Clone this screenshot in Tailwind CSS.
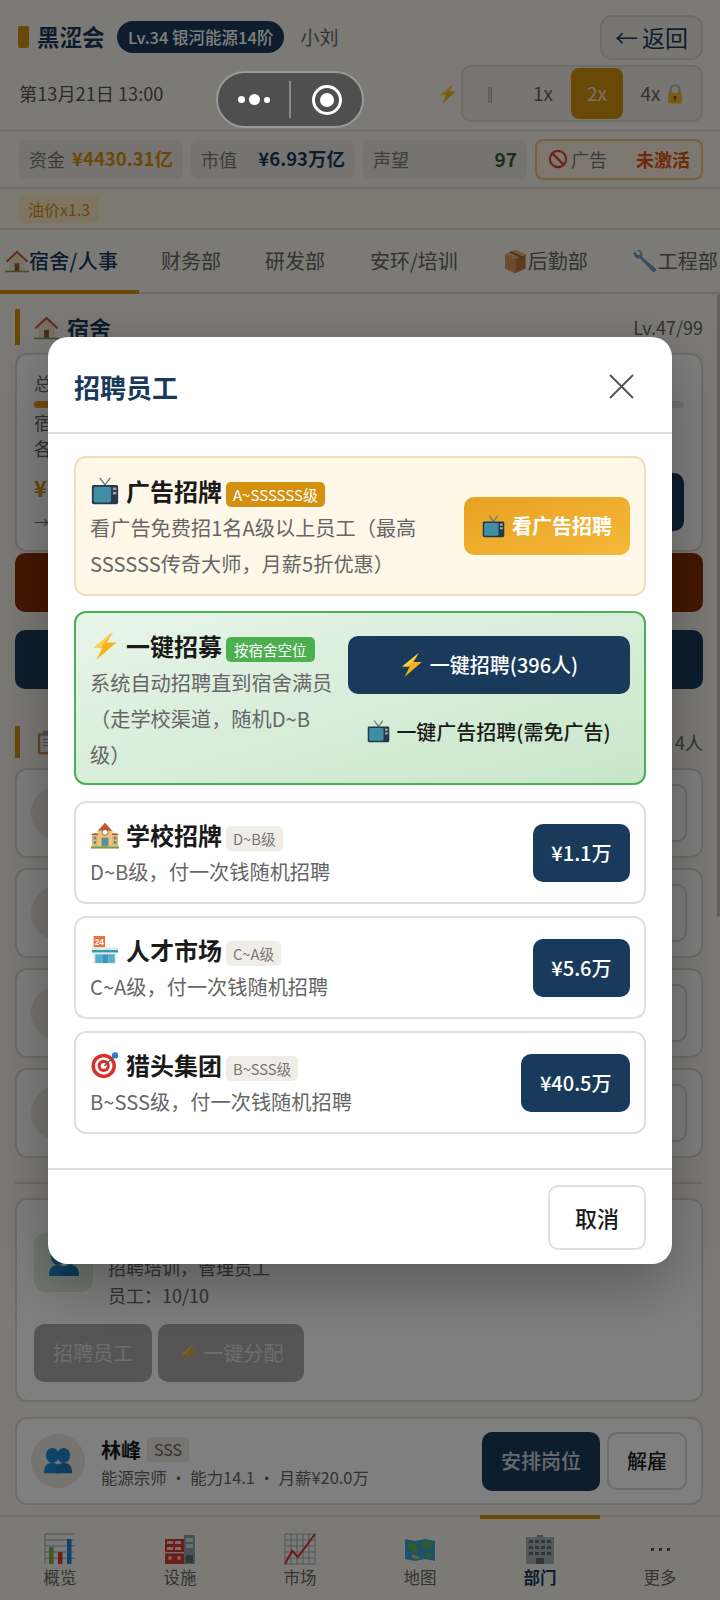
<!DOCTYPE html>
<html lang="zh-CN">
  <head>
    <meta charset="UTF-8" />
    <meta name="viewport" content="width=device-width, initial-scale=1.0" />
    <title>黑涩会</title>
    <script src="https://cdn.jsdelivr.net/npm/@tailwindcss/browser@4"></script>
  </head>
  <body class="bg-[#f7f4ee] font-['Noto_Sans_CJK_SC','Noto_Sans',sans-serif] text-[#1a1a1a]">
    <!-- icon sprite -->
    <svg class="hidden" xmlns="http://www.w3.org/2000/svg">
      <symbol id="i-tv" viewBox="0 0 32 32">
        <path d="M10 1l6 8 6-8" fill="none" stroke="#6b7780" stroke-width="1.6" />
        <rect x="1" y="9" width="30" height="22" rx="2" fill="#24384a" />
        <rect x="3" y="11" width="20" height="18" rx="2" fill="#3f8ea3" />
        <rect x="25" y="12" width="4" height="3" fill="#9aa7b0" />
        <rect x="25" y="17" width="4" height="3" fill="#9aa7b0" />
      </symbol>
      <symbol id="i-bolt" viewBox="0 0 32 32">
        <path d="M25 0L3 18h10L6 32l23-20H18z" fill="#f6b21b" />
        <path d="M25 0L3 18h8z" fill="#fbd04a" />
      </symbol>
      <symbol id="i-school" viewBox="0 0 32 32">
        <path d="M16 2L7 12h18z" fill="#c0562b" />
        <rect x="8" y="11" width="16" height="18" fill="#f2c27a" />
        <rect x="1" y="15" width="7" height="14" fill="#e9b56c" />
        <rect x="24" y="15" width="7" height="14" fill="#e9b56c" />
        <path d="M0 16h8v-2H3zM32 16h-8v-2h5z" fill="#c0562b" />
        <circle cx="16" cy="13" r="3.4" fill="#fff" stroke="#8a5a2b" />
        <rect x="12" y="19" width="8" height="10" fill="#5a8f9e" />
        <rect x="3" y="18" width="3" height="3" fill="#4a8fa3" />
        <rect x="26" y="18" width="3" height="3" fill="#4a8fa3" />
        <rect x="3" y="23" width="3" height="3" fill="#4a8fa3" />
        <rect x="26" y="23" width="3" height="3" fill="#4a8fa3" />
        <rect x="0" y="29" width="32" height="2.500" fill="#6fa23e" />
      </symbol>
      <symbol id="i-store" viewBox="0 0 32 32">
        <rect x="3" y="0" width="13" height="13" fill="#e8743b" />
        <text x="9.500" y="10" text-anchor="middle" font-size="9.500" font-weight="700" fill="#fff" font-family="Liberation Sans, sans-serif">24</text>
        <rect x="1" y="13" width="30" height="3" fill="#e4e7e9" />
        <rect x="1" y="16" width="30" height="3" fill="#2aa3a8" />
        <rect x="3" y="19" width="26" height="12" fill="#dfe5e8" />
        <rect x="5" y="21" width="8" height="10" fill="#55b0cc" />
        <rect x="13" y="21" width="7" height="10" fill="#3d97b5" />
        <rect x="20" y="21" width="7" height="10" fill="#55b0cc" />
      </symbol>
      <symbol id="i-target" viewBox="0 0 32 32">
        <circle cx="14.500" cy="17" r="14" fill="#d9302c" />
        <circle cx="14.500" cy="17" r="10" fill="#fff" />
        <circle cx="14.500" cy="17" r="7" fill="#d9302c" />
        <circle cx="14.500" cy="17" r="3.400" fill="#fff" />
        <path d="M15 17L28 5" stroke="#555" stroke-width="1.4" />
        <circle cx="27.500" cy="5" r="3.600" fill="#2f7fd1" />
      </symbol>
      <symbol id="i-house" viewBox="0 0 32 32">
        <path d="M16 2L1 16l2 2L16 6l13 12 2-2z" fill="#c75b38" />
        <path d="M6 15L16 6l10 9v15H6z" fill="#efe0c4" />
        <rect x="13" y="19" width="6" height="11" fill="#8a5a3a" />
        <rect x="0" y="29" width="32" height="2" fill="#6fa23e" />
      </symbol>
      <symbol id="i-box" viewBox="0 0 32 32">
        <path d="M16 1L3 7v18l13 6 13-6V7z" fill="#b9793e" />
        <path d="M16 13L3 7v18l13 6z" fill="#d79a5c" />
        <path d="M16 13l13-6-13-6L3 7z" fill="#e6b37a" />
        <path d="M8 4.500l13 6v5l3-1.400v-5L11 3z" fill="#a46a35" />
      </symbol>
      <symbol id="i-wrench" viewBox="0 0 32 32">
        <path d="M4 2c4-2 8 0 8 5 0 1 0 2-.5 3L29 25c2 2-2 6-4 4L9 12c-4 1-8-2-8-6 0-1 0-2 1-3l4 5 3-1 1-3z" fill="#6f9cc0" />
      </symbol>
      <symbol id="i-ban" viewBox="0 0 32 32">
        <circle cx="16" cy="16" r="13" fill="none" stroke="#d8423c" stroke-width="3.500" />
        <path d="M7 7l18 18" stroke="#d8423c" stroke-width="3.500" />
      </symbol>
      <symbol id="i-lock" viewBox="0 0 32 32">
        <path d="M9 15V9a7 7 0 0 1 14 0v6" fill="none" stroke="#a7b2ba" stroke-width="3.500" />
        <rect x="5" y="14" width="22" height="17" rx="2" fill="#f3b723" />
        <circle cx="16" cy="21" r="2.400" fill="#7a5a10" />
        <rect x="15" y="22" width="2" height="5" fill="#7a5a10" />
      </symbol>
      <symbol id="i-people" viewBox="0 0 32 32">
        <ellipse cx="10" cy="10" rx="7" ry="8" fill="#1f86cf" />
        <ellipse cx="22" cy="10" rx="7" ry="8" fill="#1f86cf" />
        <path d="M1 29c0-8 3-11 9-11s9 3 9 11z" fill="#1f86cf" />
        <path d="M13 29c0-8 3-11 9-11s9 3 9 11z" fill="#1a78bc" />
      </symbol>
      <symbol id="i-clip" viewBox="0 0 32 32">
        <rect x="5" y="4" width="22" height="27" rx="2" fill="#c68a4e" />
        <rect x="8" y="7" width="16" height="21" fill="#f1f1f1" />
        <rect x="11" y="1" width="10" height="6" rx="1" fill="#8e99a1" />
        <path d="M11 12h10M11 16h10M11 20h10" stroke="#8e99a1" stroke-width="1.500" />
      </symbol>
      <symbol id="i-bars" viewBox="0 0 32 32">
        <rect x="1" y="1" width="30" height="30" fill="#f4f4f4" />
        <path d="M1 1h30M1 7h30M1 13h30M1 19h30M1 25h30M1 1v30" stroke="#9aa0a4" stroke-width="1" fill="none" />
        <rect x="5" y="14" width="4.500" height="17" fill="#79b34a" />
        <rect x="14" y="19" width="4.500" height="12" fill="#d9412c" />
        <rect x="23" y="6" width="4.500" height="25" fill="#1c85d0" />
      </symbol>
      <symbol id="i-factory" viewBox="0 0 32 32">
        <rect x="20" y="2" width="11" height="29" fill="#8fa3ac" />
        <rect x="22" y="5" width="7" height="4" fill="#cfe2e8" />
        <rect x="22" y="11" width="7" height="4" fill="#cfe2e8" />
        <rect x="22" y="22" width="7" height="8" fill="#5f6a70" />
        <rect x="1" y="6" width="19" height="25" fill="#d63b35" />
        <rect x="3" y="8" width="6" height="3" fill="#f4d5d0" />
        <rect x="11" y="8" width="6" height="3" fill="#f4d5d0" />
        <rect x="3" y="14" width="6" height="3" fill="#f4d5d0" />
        <rect x="11" y="14" width="6" height="3" fill="#f4d5d0" />
        <rect x="1" y="19" width="19" height="1.500" fill="#f4d5d0" />
        <circle cx="6" cy="25" r="2" fill="#f3c9a5" />
        <circle cx="15" cy="25" r="2" fill="#f3c9a5" />
      </symbol>
      <symbol id="i-chart" viewBox="0 0 32 32">
        <rect x="1" y="1" width="30" height="30" fill="#f4f4f4" />
        <path d="M1 1v30h30M1 7h30M1 13h30M1 19h30M1 25h30M7 1v30M13 1v30M19 1v30M25 1v30M31 1v30M1 1h30" stroke="#a5a9ac" stroke-width="1" fill="none" />
        <path d="M1 31l7-13 6 6L31 1" fill="none" stroke="#d9342f" stroke-width="2" />
      </symbol>
      <symbol id="i-map" viewBox="0 0 32 32">
        <path d="M1 6l10 2 10-2 10 2v20l-10-2-10 2-10-2z" fill="#3fa0dc" />
        <path d="M4 9l7 2 4 4-3 5-5-2-3-5zM17 9l9-1 3 5-5 4-5-2zM21 21l5-2 2 4-5 2z" fill="#5cb85c" />
        <path d="M8 21l6 2 2 3-8-1z" fill="#d9c16a" />
      </symbol>
      <symbol id="i-building" viewBox="0 0 32 32">
        <rect x="13" y="2" width="6" height="3" fill="#8b9499" />
        <rect x="2" y="4" width="28" height="27" fill="#a9b4b9" />
        <path d="M5 7h4v3H5zM11 7h4v3h-4zM17 7h4v3h-4zM23 7h4v3h-4zM5 13h4v3H5zM11 13h4v3h-4zM17 13h4v3h-4zM23 13h4v3h-4zM5 19h4v3H5zM11 19h4v3h-4zM17 19h4v3h-4zM23 19h4v3h-4zM12 25h8v6h-8z" fill="#5f6b71" />
      </symbol>
    </svg>

    <div class="relative flex h-[1600px] w-[720px] flex-col overflow-hidden">
      <!-- top bar -->
      <header class="h-[131px] shrink-0 border-b border-[#dcd8d0] pl-[18px] pr-[17px]">
        <div class="mt-[15px] flex h-[44px] items-center justify-between">
          <div class="flex items-center">
            <span class="h-[22px] w-[11px] rounded-[2px] bg-[#d4900f]"></span>
            <span class="ml-[8px] text-[22.5px] font-bold text-[#1a3a5c]">黑涩会</span>
            <span class="ml-[12.500px] rounded-full bg-[#1a3a5c] px-[11px] text-[16.5px] leading-[32px] font-medium text-white">Lv.34 银河能源14阶</span>
            <span class="ml-[16px] text-[19px] text-[#666]">小刘</span>
          </div>
          <button class="flex h-[45px] w-[103px] items-center justify-center gap-[4px] rounded-[12px] border-2 border-[#dcd8d0] bg-[#f0ede6] text-[23px] text-[#1a3a5c]">←<span>返回</span></button>
        </div>
        <div class="mt-[6px] flex h-[57px] items-center justify-between">
          <span class="ml-px text-[18.2px] text-[#555]">第13月21日 13:00</span>
          <div class="flex items-center gap-[3px]">
            <svg class="h-[22px] w-[20px]"><use href="#i-bolt" /></svg>
            <div class="flex h-[57px] w-[242px] items-center gap-[3px] rounded-[10px] border-2 border-[#dcd8d0] bg-[#f0ede6] px-[2px] text-[19px] text-[#666]">
              <span class="w-[50px] text-center text-[16px]">‖</span>
              <span class="w-[50px] text-center">1x</span>
              <span class="flex h-[51px] w-[52px] items-center justify-center rounded-[8px] bg-[#d4900f] text-white/80">2x</span>
              <span class="flex flex-1 items-center justify-center gap-[4px]">4x<svg class="h-[20px] w-[20px]"><use href="#i-lock" /></svg></span>
            </div>
          </div>
        </div>
      </header>

      <!-- stats -->
      <section class="flex h-[58px] shrink-0 items-center gap-[8px] border-b-2 border-[#dcd8d0] pl-[19px] pr-[17px]">
        <div class="flex h-[39px] w-[164px] items-center justify-between rounded-[8px] bg-[#ece8e0] px-[10px] whitespace-nowrap"><span class="text-[18px] text-[#777]">资金</span><span class="text-[18.5px] font-bold text-[#d4900f]">¥4430.31亿</span></div>
        <div class="flex h-[39px] w-[164px] items-center justify-between rounded-[8px] bg-[#ece8e0] px-[10px] whitespace-nowrap"><span class="text-[18px] text-[#777]">市值</span><span class="text-[18.5px] font-bold text-[#1a3a5c]">¥6.93万亿</span></div>
        <div class="flex h-[39px] w-[164px] items-center justify-between rounded-[8px] bg-[#ece8e0] px-[10px] whitespace-nowrap"><span class="text-[18px] text-[#777]">声望</span><span class="text-[19px] font-bold text-[#2f5f2f]">97</span></div>
        <div class="flex h-[41px] flex-1 items-center justify-between rounded-[8px] border-2 border-[#f0c070] bg-[#fdeede] px-[11px] whitespace-nowrap"><span class="flex items-center gap-[3px] text-[18px] text-[#777]"><svg class="h-[20px] w-[20px]"><use href="#i-ban" /></svg>广告</span><span class="text-[18px] font-bold text-[#d9560f]">未激活</span></div>
      </section>

      <!-- event strip -->
      <div class="flex h-[41px] shrink-0 items-center border-b-2 border-[#ecdcbc] bg-[#fdf3e0] px-[19px]">
        <span class="rounded-[6px] bg-[#fbe8c4] px-[9px] text-[16px] leading-[28px] text-[#d4900f]">油价x1.3</span>
      </div>

      <!-- tabs -->
      <nav class="flex h-[64px] shrink-0 items-stretch border-b-2 border-[#dcd8d0] text-[20px] text-[#666] whitespace-nowrap">
        <div class="relative flex w-[139px] items-center pl-[5px] font-medium tracking-[0.3px] text-[#1a3a5c]"><svg class="h-[24px] w-[24px]"><use href="#i-house" /></svg>宿舍/人事<span class="absolute inset-x-0 bottom-[-2px] h-[4px] bg-[#d4900f]"></span></div>
        <div class="flex items-center px-[22px]">财务部</div>
        <div class="flex items-center px-[22px]">研发部</div>
        <div class="flex items-center pl-[23px] pr-[22px]">安环/培训</div>
        <div class="flex items-center px-[23px]"><svg class="h-[25px] w-[25px]"><use href="#i-box" /></svg>后勤部</div>
        <div class="flex items-center pl-[22px]"><svg class="h-[25px] w-[25px]"><use href="#i-wrench" /></svg>工程部</div>
      </nav>

      <!-- page body, mostly behind the dialog -->
      <main class="flex min-h-0 flex-1 flex-col pl-[15px] pr-[17px] pt-[15px]">
        <div class="flex h-[36px] items-center justify-between border-l-[5px] border-[#d4900f] pl-[14px]">
          <span class="flex items-center gap-[8px] text-[22px] font-bold text-[#1a3a5c]"><svg class="h-[25px] w-[25px]"><use href="#i-house" /></svg>宿舍</span>
          <span class="text-[18px] text-[#666]">Lv.47/99</span>
        </div>
        <div class="mt-[8px] h-[199px] rounded-[12px] border-2 border-[#dcd8d0] bg-white px-[17px] pt-[15px] text-[18px] text-[#666]">
          <div class="leading-[26px]">总</div>
          <div class="mt-[5px] h-[7px] rounded-full bg-[#e8e4dc]"><div class="h-full w-[47%] rounded-full bg-[#e8a020]"></div></div>
          <div class="mt-[1px] leading-[26px]">宿</div>
          <div class="leading-[26px]">各</div>
          <div class="relative mt-[11px] text-[22px] leading-[30px] font-bold text-[#d4900f]">¥<span class="absolute right-0 top-[1px] h-[58px] w-[100px] rounded-[10px] bg-[#1a3a5c]"></span></div>
          <div class="text-[15px] leading-[40px]">→</div>
        </div>
        <div class="mt-[1px] h-[59px] rounded-[10px] bg-[#8a2e05]"></div>
        <div class="mt-[18px] h-[59px] rounded-[10px] bg-[#1a3a5c]"></div>
        <div class="mt-[37px] flex h-[32px] items-center justify-between border-l-[5px] border-[#d4900f] pl-[14px]">
          <svg class="h-[25px] w-[25px]"><use href="#i-clip" /></svg>
          <span class="text-[18px] text-[#666]">4人</span>
        </div>
        <div class="mt-[10px] flex flex-col gap-[10px]">
          <div class="flex h-[90px] items-center justify-between rounded-[12px] border-2 border-[#dcd8d0] bg-white px-[14px]"><span class="h-[54px] w-[54px] rounded-full bg-[#ece8e0]"></span><span class="h-[58px] w-[80px] rounded-[10px] border-2 border-[#dcd8d0]"></span></div>
          <div class="flex h-[90px] items-center justify-between rounded-[12px] border-2 border-[#dcd8d0] bg-white px-[14px]"><span class="h-[54px] w-[54px] rounded-full bg-[#ece8e0]"></span><span class="h-[58px] w-[80px] rounded-[10px] border-2 border-[#dcd8d0]"></span></div>
          <div class="flex h-[90px] items-center justify-between rounded-[12px] border-2 border-[#dcd8d0] bg-white px-[14px]"><span class="h-[54px] w-[54px] rounded-full bg-[#ece8e0]"></span><span class="h-[58px] w-[80px] rounded-[10px] border-2 border-[#dcd8d0]"></span></div>
          <div class="flex h-[90px] items-center justify-between rounded-[12px] border-2 border-[#dcd8d0] bg-white px-[14px]"><span class="h-[54px] w-[54px] rounded-full bg-[#ece8e0]"></span><span class="h-[58px] w-[80px] rounded-[10px] border-2 border-[#dcd8d0]"></span></div>
        </div>
        <div class="mt-[24px] h-[2px] bg-[#dcd8d0]"></div>
        <div class="mt-[14px] h-[204px] rounded-[12px] border-2 border-[#dcd8d0] bg-white px-[17px] pt-[33px]">
          <div class="flex gap-[15px]">
            <span class="flex h-[59px] w-[59px] items-center justify-center rounded-[12px] bg-[#dfeee0]"><svg class="h-[32px] w-[32px]"><use href="#i-people" /></svg></span>
            <div class="text-[18px] leading-[28px] text-[#666]">
              <div class="mt-[20px]">招聘培训，管理员工</div>
              <div>员工：10/10</div>
            </div>
          </div>
          <div class="mt-[15px] flex gap-[6px] text-[20px] text-white/60">
            <span class="flex h-[58px] w-[118px] items-center justify-center rounded-[10px] bg-[#aaa]">招聘员工</span>
            <span class="flex h-[58px] w-[146px] items-center justify-center gap-[5px] rounded-[10px] bg-[#aaa]"><svg class="h-[24px] w-[20px] opacity-70"><use href="#i-bolt" /></svg>一键分配</span>
          </div>
        </div>
        <div class="mt-[15px] flex h-[88px] shrink-0 items-center rounded-[12px] border-2 border-[#dcd8d0] bg-white px-[14px]">
          <span class="flex h-[54px] w-[54px] shrink-0 items-center justify-center rounded-full bg-[#ece8e0]"><svg class="h-[30px] w-[30px]"><use href="#i-people" /></svg></span>
          <div class="ml-[16px] flex-1 pt-[3px]">
            <div class="flex items-center gap-[6px]"><span class="text-[20px] leading-[28px] font-bold">林峰</span><span class="rounded-[4px] bg-[#ece8e0] px-[7px] text-[16px] leading-[25px] text-[#666]">SSS</span></div>
            <div class="text-[16.4px] leading-[26px] text-[#666]">能源宗师 · 能力14.1 · 月薪¥20.0万</div>
          </div>
          <button class="h-[59px] w-[118px] rounded-[10px] bg-[#1a3a5c] text-[20px] font-medium text-white/80">安排岗位</button>
          <button class="ml-[7px] h-[58px] w-[80px] rounded-[10px] border-2 border-[#dcd8d0] text-[20px] font-medium">解雇</button>
        </div>
      </main>

      <!-- bottom nav -->
      <footer class="relative grid h-[85px] shrink-0 grid-cols-6 border-t-2 border-[#dcd8d0] bg-[#f7f4ee] text-[16.5px] text-[#666]">
        <div class="flex flex-col items-center pt-[16px]"><svg class="h-[32px] w-[32px]"><use href="#i-bars" /></svg><span class="mt-px leading-[22px]">概览</span></div>
        <div class="flex flex-col items-center pt-[16px]"><svg class="h-[32px] w-[32px]"><use href="#i-factory" /></svg><span class="mt-px leading-[22px]">设施</span></div>
        <div class="flex flex-col items-center pt-[16px]"><svg class="h-[32px] w-[32px]"><use href="#i-chart" /></svg><span class="mt-px leading-[22px]">市场</span></div>
        <div class="flex flex-col items-center pt-[16px]"><svg class="h-[32px] w-[32px]"><use href="#i-map" /></svg><span class="mt-px leading-[22px]">地图</span></div>
        <div class="relative flex flex-col items-center pt-[16px] font-bold text-[#1a3a5c]"><span class="absolute inset-x-0 top-[-2px] h-[4px] bg-[#d4900f]"></span><svg class="h-[32px] w-[32px]"><use href="#i-building" /></svg><span class="mt-px leading-[22px]">部门</span></div>
        <div class="flex flex-col items-center pt-[16px]"><span class="flex h-[32px] items-center gap-[5px]"><i class="h-[3px] w-[3px] bg-[#555]"></i><i class="h-[3px] w-[3px] bg-[#555]"></i><i class="h-[3px] w-[3px] bg-[#555]"></i></span><span class="mt-px leading-[22px]">更多</span></div>
      </footer>

      <!-- page scrollbar -->
      <div class="absolute right-0 top-[294px] h-[623px] w-[3px] rounded-full bg-black/20"></div>

      <!-- dialog backdrop -->
      <div class="absolute inset-0 bg-black/50"></div>

      <!-- recruit dialog -->
      <div class="absolute left-[48px] top-[337px] flex h-[927px] w-[624px] flex-col rounded-[20px] bg-white shadow-[0_20px_60px_rgba(0,0,0,0.3)]">
        <div class="flex h-[97px] shrink-0 items-center justify-between border-b-2 border-[#e0e0e0] pl-[26px] pr-[38px] pt-[3px]">
          <h3 class="text-[26px] font-bold text-[#1a3a5c]">招聘员工</h3>
          <svg class="h-[25px] w-[25px]" viewBox="0 0 25 25" fill="none" stroke="#555" stroke-width="2"><path d="M1 1l23 23M24 1L1 24" /></svg>
        </div>

        <div class="flex flex-1 flex-col gap-[12px] px-[26px] pt-[22px]">
          <div class="flex h-[140px] items-center gap-[14px] rounded-[12px] border-2 border-[#f0dfb8] bg-[#fff7e8] p-[14px]">
            <div class="mt-px flex-1 self-start">
              <div class="flex h-[35px] items-center whitespace-nowrap">
                <svg class="ml-px h-[28px] w-[28px]"><use href="#i-tv" /></svg>
                <span class="ml-[7px] text-[24px] leading-[35px] font-bold">广告招牌</span>
                <span class="ml-[4px] mt-[8px] rounded-[5px] bg-[#d4900f] px-[7px] text-[15px] leading-[25px] text-white">A~SSSSSS级</span>
              </div>
              <p class="mt-[2px] text-[20.2px] leading-[36px] text-[#666]">看广告免费招1名A级以上员工（最高SSSSSS传奇大师，月薪5折优惠）</p>
            </div>
            <button class="flex h-[58px] w-[166px] shrink-0 items-center justify-center gap-[7px] rounded-[10px] bg-gradient-to-br from-[#e8a020] to-[#f5b93a] text-[20px] font-bold text-white"><svg class="h-[23px] w-[23px]"><use href="#i-tv" /></svg>看广告招聘</button>
          </div>

          <div class="mt-[3px] flex h-[174px] items-center gap-[15px] rounded-[12px] border-2 border-[#4caf50] bg-gradient-to-br from-[#e8f5e9] to-[#c8e6c9] p-[14px]">
            <div class="mt-px w-[243px] shrink-0 self-start">
              <div class="flex h-[35px] items-center whitespace-nowrap">
                <svg class="ml-px h-[28px] w-[28px]"><use href="#i-bolt" /></svg>
                <span class="ml-[7px] text-[24px] leading-[35px] font-bold">一键招募</span>
                <span class="ml-[4px] mt-[8px] rounded-[5px] bg-[#4caf50] px-[8px] text-[14.5px] leading-[25px] text-white">按宿舍空位</span>
              </div>
              <p class="mt-[2px] text-[20.2px] leading-[36px] text-[#666]">系统自动招聘直到宿舍满员（走学校渠道，随机D~B级）</p>
            </div>
            <div class="flex flex-1 flex-col gap-[9px]">
              <button class="flex h-[58px] items-center justify-center gap-[6px] rounded-[10px] bg-[#1a3a5c] text-[20px] font-medium text-white"><svg class="h-[24px] w-[24px]"><use href="#i-bolt" /></svg>一键招聘(396人)</button>
              <button class="flex h-[58px] items-center justify-center gap-[6px] text-[20px] font-medium"><svg class="h-[23px] w-[23px]"><use href="#i-tv" /></svg>一键广告招聘(需免广告)</button>
            </div>
          </div>

          <div class="mt-[4px] flex h-[103px] items-center justify-between rounded-[12px] border-2 border-[#e0e0e0] p-[14px]">
            <div class="self-start">
              <div class="flex h-[35px] items-center whitespace-nowrap">
                <svg class="ml-px h-[28px] w-[28px]"><use href="#i-school" /></svg>
                <span class="ml-[7px] text-[24px] leading-[35px] font-bold">学校招牌</span>
                <span class="ml-[4px] mt-[8px] rounded-[5px] bg-[#f0ede6] px-[7px] text-[14.7px] leading-[25px] text-[#777]">D~B级</span>
              </div>
              <p class="mt-[2px] text-[20.2px] leading-[36px] text-[#666]">D~B级，付一次钱随机招聘</p>
            </div>
            <button class="h-[58px] rounded-[10px] bg-[#1a3a5c] px-[18.500px] text-[20px] font-medium text-white">¥1.1万</button>
          </div>

          <div class="flex h-[103px] items-center justify-between rounded-[12px] border-2 border-[#e0e0e0] p-[14px]">
            <div class="self-start">
              <div class="flex h-[35px] items-center whitespace-nowrap">
                <svg class="ml-px h-[28px] w-[28px]"><use href="#i-store" /></svg>
                <span class="ml-[7px] text-[24px] leading-[35px] font-bold">人才市场</span>
                <span class="ml-[4px] mt-[8px] rounded-[5px] bg-[#f0ede6] px-[7px] text-[14.7px] leading-[25px] text-[#777]">C~A级</span>
              </div>
              <p class="mt-[2px] text-[20.2px] leading-[36px] text-[#666]">C~A级，付一次钱随机招聘</p>
            </div>
            <button class="h-[58px] rounded-[10px] bg-[#1a3a5c] px-[18.500px] text-[20px] font-medium text-white">¥5.6万</button>
          </div>

          <div class="flex h-[103px] items-center justify-between rounded-[12px] border-2 border-[#e0e0e0] p-[14px]">
            <div class="self-start">
              <div class="flex h-[35px] items-center whitespace-nowrap">
                <svg class="ml-px h-[28px] w-[28px]"><use href="#i-target" /></svg>
                <span class="ml-[7px] text-[24px] leading-[35px] font-bold">猎头集团</span>
                <span class="ml-[4px] mt-[8px] rounded-[5px] bg-[#f0ede6] px-[7px] text-[14.7px] leading-[25px] text-[#777]">B~SSS级</span>
              </div>
              <p class="mt-[2px] text-[20.2px] leading-[36px] text-[#666]">B~SSS级，付一次钱随机招聘</p>
            </div>
            <button class="h-[58px] rounded-[10px] bg-[#1a3a5c] px-[18.500px] text-[20px] font-medium text-white">¥40.5万</button>
          </div>
        </div>

        <div class="flex h-[96px] shrink-0 items-center justify-end border-t-2 border-[#e0e0e0] px-[26px]">
          <button class="h-[65px] w-[98px] rounded-[10px] border-2 border-[#e0e0e0] text-[22px] font-medium">取消</button>
        </div>
      </div>

      <!-- wechat capsule sits above the dim layer -->
      <div class="absolute left-[216px] top-[71px] flex h-[57px] w-[148px] items-center rounded-full border-2 border-[#999] bg-[#4f4f4f]">
        <div class="flex w-[71px] items-center justify-center gap-[4px]">
          <i class="h-[7px] w-[7px] rounded-full bg-white"></i><i class="h-[11px] w-[11px] rounded-full bg-white"></i><i class="h-[6px] w-[6px] rounded-full bg-white"></i>
        </div>
        <span class="h-[37px] w-[2px] bg-[#8a8a8a]"></span>
        <div class="flex flex-1 items-center justify-center">
          <span class="flex h-[30px] w-[30px] items-center justify-center rounded-full border-[3px] border-white"><i class="h-[14px] w-[14px] rounded-full bg-white"></i></span>
        </div>
      </div>
    </div>
  </body>
</html>
